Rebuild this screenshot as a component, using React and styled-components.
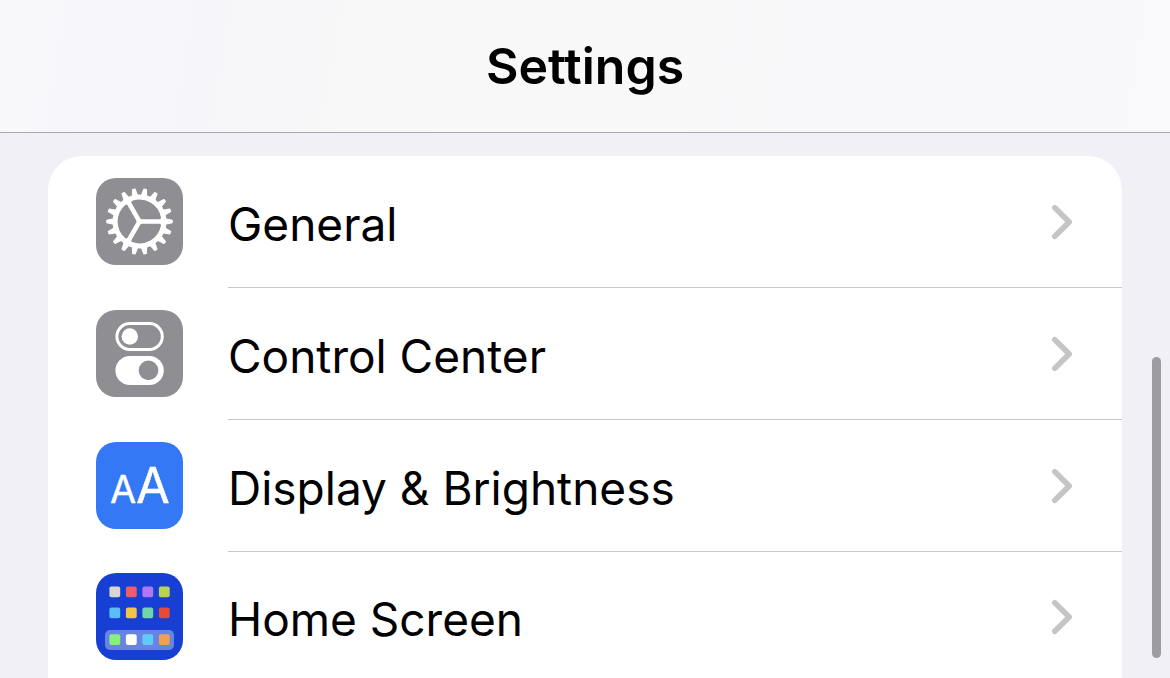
import styled, { createGlobalStyle } from 'styled-components';

const colors = {
    page: '#f1f0f6',
    card: '#ffffff',
    text: '#000000',
    separator: '#c6c6c8',
    headerLine: '#a9a9ae',
    chevron: '#c5c5c7',
    grey: '#8e8e93',
    blue: '#3478f6',
    navy: '#183fd4',
    scrollbar: '#9d9ca1',
};

const GlobalStyle = createGlobalStyle`
    * {
        box-sizing: border-box;
    }
    body {
        margin: 0;
        background-color: ${colors.page};
        color: ${colors.text};
        font-family: Inter, 'Liberation Sans', sans-serif;
    }
`;

const Screen = styled.div`
    position: relative;
    display: flex;
    flex-direction: column;
    height: 100vh;
    overflow: hidden;
`;

const Header = styled.header`
    display: flex;
    flex-shrink: 0;
    align-items: center;
    justify-content: center;
    padding: 36px 48px;
    background: linear-gradient(100deg, #f9f9fc 0%, #f6f6fb 14%, #f8f8f9 30%, #f9f9fb 100%);
    border-bottom: 1px solid ${colors.headerLine};
`;

const Title = styled.h1`
    margin: 0;
    font-size: 50px;
    font-weight: 600;
    line-height: 60px;
`;

const Content = styled.main`
    flex: 1;
    min-height: 0;
    padding: 23px 48px 0;
`;

const SettingsList = styled.ul`
    margin: 0;
    padding: 0;
    list-style: none;
    background-color: ${colors.card};
    border-radius: 34px 34px 0 0;
`;

const RowLink = styled.a`
    display: flex;
    align-items: stretch;
    gap: 45px;
    padding-left: 48px;
    color: inherit;
    text-decoration: none;
`;

const IconTile = styled.span`
    display: flex;
    flex-shrink: 0;
    align-self: flex-start;
    width: 87px;
    height: 87px;
    margin-top: ${(props) => (props.$last ? '21px' : '22px')};
    overflow: hidden;
    border-radius: 20px;
    background-color: ${(props) => props.$color};
`;

const RowBody = styled.span`
    display: flex;
    flex: 1;
    align-items: center;
    justify-content: space-between;
    height: ${(props) => (props.$last ? '130px' : '132px')};
    padding-right: 48px;
    border-bottom: ${(props) =>
        props.$last ? 'none' : `1px solid ${colors.separator}`};
`;

const Label = styled.span`
    padding-top: 4px;
    font-size: 46px;
    line-height: 60px;
`;

const ScrollThumb = styled.div`
    position: absolute;
    right: 9px;
    bottom: 20px;
    width: 9px;
    height: 301px;
    border-radius: 5px;
    background-color: ${colors.scrollbar};
`;

const TOOTH_ANGLES = Array.from({ length: 18 }, (_, i) => i * 20);

function GearIcon() {
    return (
        <svg width="87" height="87" viewBox="-43.5 -43.5 87 87" aria-hidden="true">
            <circle r="27" fill="#fff" />
            {TOOTH_ANGLES.map((angle) => (
                <path
                    key={angle}
                    d="M25.5 -2.8 L32.8 -1.3 V1.3 L25.5 2.8 Z"
                    fill="#fff"
                    stroke="#fff"
                    strokeWidth="1"
                    strokeLinejoin="round"
                    transform={`rotate(${angle})`}
                />
            ))}
            {[0, 120, 240].map((angle) => (
                <path
                    key={angle}
                    d="M2.2 3.8 L20 3.8 A20.3 20.3 0 0 1 -6.7 19.2 Z"
                    fill={colors.grey}
                    stroke={colors.grey}
                    strokeWidth="3"
                    strokeLinejoin="round"
                    transform={`rotate(${angle})`}
                />
            ))}
        </svg>
    );
}

function TogglesIcon() {
    return (
        <svg width="87" height="87" viewBox="0 0 87 87" aria-hidden="true">
            <rect
                x="20.9"
                y="13.6"
                width="45.4"
                height="25.8"
                rx="12.9"
                fill="none"
                stroke="#fff"
                strokeWidth="3"
            />
            <circle cx="33.8" cy="26.5" r="8.2" fill="#fff" />
            <rect x="19.4" y="46" width="48.4" height="29" rx="14.5" fill="#fff" />
            <circle cx="52.5" cy="60.4" r="9.8" fill={colors.grey} />
        </svg>
    );
}

function TextSizeIcon() {
    return (
        <svg width="87" height="87" viewBox="0 0 87 87" aria-hidden="true">
            <g
                fill="#fff"
                stroke="#fff"
                strokeWidth="0.4"
                strokeLinejoin="round"
                fontFamily="Inter, sans-serif"
                textAnchor="middle"
            >
                <text x="27" y="61" fontSize="38">A</text>
                <text x="57" y="61" fontSize="49">A</text>
            </g>
        </svg>
    );
}

const APP_ROWS = [
    { y: 13.4, fills: ['#d7d7cf', '#ec5f69', '#b077f5', '#b9d155'] },
    { y: 34.4, fills: ['#5bbcf8', '#f6c445', '#70d6aa', '#e84a37'] },
    { y: 61.2, fills: ['#87ee80', '#ffffff', '#60cbfa', '#f0a054'] },
];

function HomeScreenIcon() {
    return (
        <svg width="87" height="87" viewBox="0 0 87 87" aria-hidden="true">
            <rect x="9" y="57" width="69" height="20" rx="5" fill="#6884e2" />
            {APP_ROWS.map((row) =>
                row.fills.map((fill, i) => (
                    <rect
                        key={fill}
                        x={13.4 + i * 16.5}
                        y={row.y}
                        width="10.8"
                        height="10.8"
                        rx="2"
                        fill={fill}
                    />
                ))
            )}
        </svg>
    );
}

function Chevron() {
    return (
        <svg width="23" height="36" viewBox="0 0 23 36" aria-hidden="true">
            <path
                d="M3.8 3.8 L18.2 18 L3.8 32.2"
                fill="none"
                stroke={colors.chevron}
                strokeWidth="5.6"
                strokeLinecap="round"
                strokeLinejoin="round"
            />
        </svg>
    );
}

const settings = [
    { id: 'general', label: 'General', color: colors.grey, Icon: GearIcon },
    {
        id: 'control-center',
        label: 'Control Center',
        color: colors.grey,
        Icon: TogglesIcon,
    },
    {
        id: 'display',
        label: 'Display & Brightness',
        color: colors.blue,
        Icon: TextSizeIcon,
    },
    {
        id: 'home-screen',
        label: 'Home Screen',
        color: colors.navy,
        Icon: HomeScreenIcon,
    },
];

function App() {
    return (
        <Screen>
            <GlobalStyle />
            <Header>
                <Title>Settings</Title>
            </Header>
            <Content>
                <SettingsList>
                    {settings.map(({ id, label, color, Icon }, index) => {
                        const last = index === settings.length - 1;
                        return (
                            <li key={id}>
                                <RowLink href={`#${id}`}>
                                    <IconTile $color={color} $last={last}>
                                        <Icon />
                                    </IconTile>
                                    <RowBody $last={last}>
                                        <Label>{label}</Label>
                                        <Chevron />
                                    </RowBody>
                                </RowLink>
                            </li>
                        );
                    })}
                </SettingsList>
            </Content>
            <ScrollThumb />
        </Screen>
    );
}

export default App;
